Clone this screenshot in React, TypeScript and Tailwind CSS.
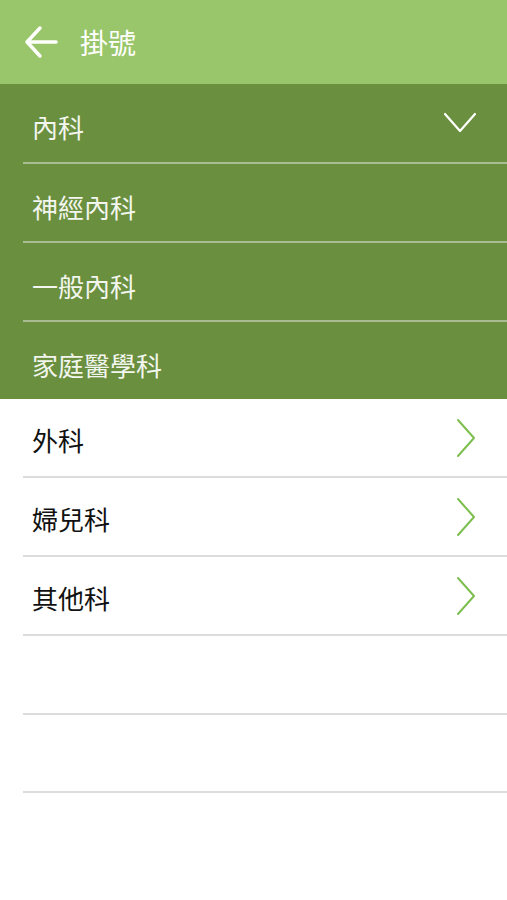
const font = { fontFamily: '"Noto Sans CJK TC", "Noto Sans", sans-serif' };

const expanded = ["神經內科", "一般內科", "家庭醫學科"];
const others = ["外科", "婦兒科", "其他科"];

function ChevronRight() {
  return (
    <svg width="20" height="40" viewBox="0 0 20 40" className="shrink-0">
      <path d="M2 2 L18 20 L2 38" fill="none" stroke="#7dbf4f" strokeWidth="2" strokeLinecap="round" strokeLinejoin="round" />
    </svg>
  );
}

export default function App() {
  return (
    <div className="min-h-[900px] w-full bg-white" style={font}>
      <header className="flex h-[84px] items-center bg-[#99c66a] pl-6">
        <svg width="34" height="34" viewBox="0 0 34 34" className="shrink-0">
          <path d="M32 17 H3 M16 3 L3 17 L16 31" fill="none" stroke="#fff" strokeWidth="3.5" strokeLinecap="round" strokeLinejoin="round" />
        </svg>
        <h1 className="ml-[22px] text-[28px] leading-none text-white">掛號</h1>
      </header>

      <div className="bg-[#6a8f3f]">
        <div className="flex h-[78px] items-center justify-between pl-8 pr-[30px]">
          <span className="pt-2 text-[26px] leading-none text-[#f3f6ee]">內科</span>
          <svg width="34" height="24" viewBox="0 0 34 24">
            <path d="M2 3 L17 20 L32 3" fill="none" stroke="#fff" strokeWidth="2.2" strokeLinecap="round" strokeLinejoin="round" />
          </svg>
        </div>
        {expanded.map((name, i) => (
          <div key={name}>
            <div className="ml-[23px] h-[2px] bg-[#a9bc92]" />
            <div className={`flex items-center pl-8 ${i === expanded.length - 1 ? "h-[77px]" : "h-[77px]"}`}>
              <span className="pt-2 text-[26px] leading-none text-[#f3f6ee]">{name}</span>
            </div>
          </div>
        ))}
      </div>

      <div>
        {others.map((name) => (
          <div key={name}>
            <div className="flex h-[77px] items-center justify-between pl-8 pr-[31px]">
              <span className="pt-1 text-[26px] leading-none text-[#111]">{name}</span>
              <ChevronRight />
            </div>
            <div className="ml-[23px] h-[2px] bg-[#dcdcdc]" />
          </div>
        ))}
        <div className="h-[77px]" />
        <div className="ml-[23px] h-[2px] bg-[#dcdcdc]" />
        <div className="h-[76px]" />
        <div className="ml-[23px] h-[2px] bg-[#dcdcdc]" />
      </div>
    </div>
  );
}
